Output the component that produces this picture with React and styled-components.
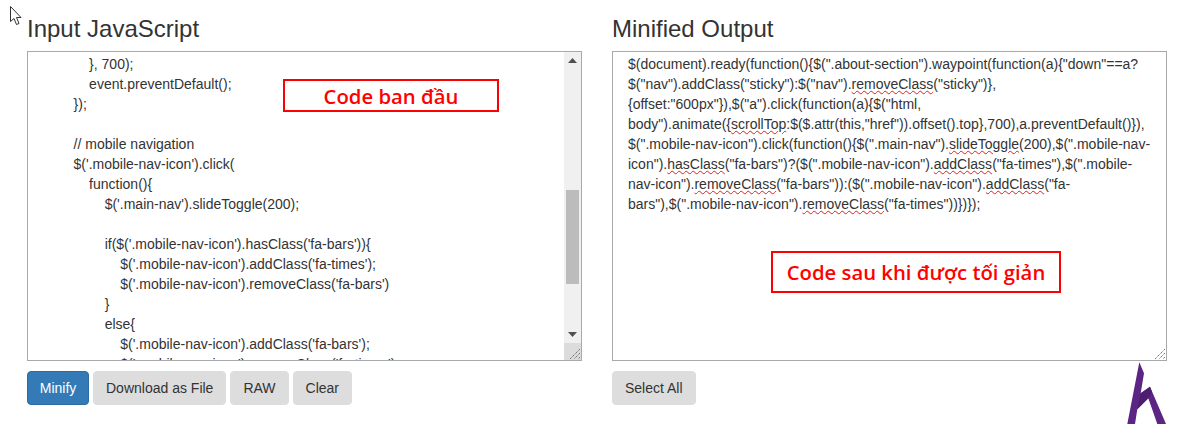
import React from "react";
import styled, { createGlobalStyle } from "styled-components";

const Global = createGlobalStyle`
  html, body { margin: 0; padding: 0; background: #fff; }
  body { font-family: "Liberation Sans", Arial, sans-serif; color: #333; overflow: hidden; }
  * { box-sizing: border-box; }
`;
const Page = styled.div`
  position: relative; width: 1192px; height: 425px; overflow: hidden;
  display: grid; grid-template-columns: 555px 555px; column-gap: 30px;
  padding: 15px 0 0 27px; align-content: start;
`;
const Column = styled.section`display: flex; flex-direction: column; position: relative;`;
const Heading = styled.h2`
  margin: 0 0 9px; font-size: 24px; line-height: 27px; font-weight: 400; color: #333;
`;
const Editor = styled.div`
  position: relative; height: 310px; border: 1px solid #a9a9a9; background: #fff;
  overflow: hidden; display: flex;
`;
const Code = styled.div`
  flex: 1; min-width: 0; white-space: pre; font-size: 14px; line-height: 20px; color: #333;
  padding: ${p => p.$pad};
`;
const Misspelt = styled.span`
  text-decoration: underline wavy #e02020 1px; text-underline-offset: 1px;
`;
const Scrollbar = styled.div`
  width: 17px; background: #f0f0f0; display: flex; flex-direction: column; flex: none;
  margin-bottom: 17px;
`;
const ScrollArrow = styled.div`
  height: 17px; flex: none; display: flex; align-items: center; justify-content: center;
`;
const ScrollTrack = styled.div`flex: 1; padding: 121px 2px 0;`;
const ScrollThumb = styled.div`height: 94px; background: #bcbcbc;`;
const Corner = styled.div`
  position: absolute; right: 0; bottom: 0; width: 17px; height: 17px;
  background: ${p => p.$filled ? "#dcdcdc" : "transparent"};
`;
const Actions = styled.div`display: flex; gap: 4px; margin-top: 10px;`;
const Button = styled.button`
  height: 34px; padding: 6px ${p => p.$primary ? "0" : "12px"};
  width: ${p => p.$primary ? "62px" : "auto"};
  border: 1px solid ${p => p.$primary ? "#2e6da4" : "#ddd"};
  border-radius: 4px; background: ${p => p.$primary ? "#337ab7" : "#ddd"};
  color: ${p => p.$primary ? "#fff" : "#333"};
  font: 400 14px/20px "Liberation Sans", Arial, sans-serif;
`;
const Callout = styled.div`
  position: absolute; display: flex; align-items: center; justify-content: center;
  left: ${p => p.$x}px; top: ${p => p.$y}px; width: ${p => p.$w}px; height: ${p => p.$h}px;
  border: 2px solid #f00; background: #fff; color: #f00;
  font: 600 ${p => p.$size}px "Open Sans", sans-serif;
`;
const Cursor = styled.svg`position: absolute; left: 10px; top: 6px;`;
const Logo = styled.svg`position: absolute; left: 1126px; top: 362px;`;

const inputCode = `        }, 700);
        event.preventDefault();
    });

    // mobile navigation
    $('.mobile-nav-icon').click(
        function(){
            $('.main-nav').slideToggle(200);

            if($('.mobile-nav-icon').hasClass('fa-bars')){
                $('.mobile-nav-icon').addClass('fa-times');
                $('.mobile-nav-icon').removeClass('fa-bars')
            }
            else{
                $('.mobile-nav-icon').addClass('fa-bars');
                $('.mobile-nav-icon').removeClass('fa-times');`;

const Resize = () => (
  <svg width="17" height="17" viewBox="0 0 17 17" style={{ display: "block" }}>
    <path d="M16 6 L6 16 M16 10 L10 16 M16 14 L14 16" stroke="#777" strokeWidth="1" strokeDasharray="1.5 .6" fill="none" />
  </svg>
);

export default function App() {
  return (
    <Page>
      <Global />
      <Column>
        <Heading>Input JavaScript</Heading>
        <Editor>
          <Code $pad="2px 0 0 30px">{inputCode}</Code>
          <Scrollbar>
            <ScrollArrow>
              <svg width="9" height="5" viewBox="0 0 9 5"><path d="M4.5 0 L9 5 H0 Z" fill="#505050" /></svg>
            </ScrollArrow>
            <ScrollTrack><ScrollThumb /></ScrollTrack>
            <ScrollArrow>
              <svg width="9" height="5" viewBox="0 0 9 5"><path d="M0 0 H9 L4.5 5 Z" fill="#505050" /></svg>
            </ScrollArrow>
          </Scrollbar>
          <Corner $filled><Resize /></Corner>
        </Editor>
        <Actions>
          <Button $primary>Minify</Button>
          <Button>Download as File</Button>
          <Button>RAW</Button>
          <Button>Clear</Button>
        </Actions>
      </Column>
      <Column>
        <Heading>Minified Output</Heading>
        <Editor>
          <Code $pad="2px 0 0 15px">
            {`$(document).ready(function(){$(".about-section").waypoint(function(a){"down"==a?
$("nav").addClass("sticky"):$("nav").`}<Misspelt>removeClass</Misspelt>{`("sticky")},
{offset:"600px"}),$("a").click(function(a){$("html,
body").animate({`}<Misspelt>scrollTop</Misspelt>{`:$($.attr(this,"href")).offset().top},700),a.preventDefault()}),
$(".mobile-nav-icon").click(function(){$(".main-nav").`}<Misspelt>slideToggle</Misspelt>{`(200),$(".mobile-nav-
icon").`}<Misspelt>hasClass</Misspelt>{`("fa-bars")?($(".mobile-nav-icon").`}<Misspelt>addClass</Misspelt>{`("fa-times"),$(".mobile-
nav-icon").`}<Misspelt>removeClass</Misspelt>{`("fa-bars")):($(".mobile-nav-icon").`}<Misspelt>addClass</Misspelt>{`("fa-
bars"),$(".mobile-nav-icon").`}<Misspelt>removeClass</Misspelt>{`("fa-times"))})});`}
          </Code>
          <Corner><Resize /></Corner>
        </Editor>
        <Actions>
          <Button>Select All</Button>
        </Actions>
      </Column>
      <Callout $x={283} $y={79} $w={216} $h={33} $size={20.3}>Code ban đầu</Callout>
      <Callout $x={771} $y={251} $w={290} $h={42} $size={20.3}>Code sau khi được tối giản</Callout>
      <Cursor width="14" height="20" viewBox="0 0 14 20">
        <path d="M.5.5 V15.5 L4 12.5 L6.5 18.5 L9 17.500 L6.5 11.5 H11 Z" fill="#fff" stroke="#333" strokeWidth="1" />
      </Cursor>
      <Logo width="41" height="63" viewBox="0 0 41 63">
        <path d="M13.300 .3 L18 11.300 L14.700 31.300 L24 24.700 L40 62 L31.300 62 L22.300 36.300 L11.300 47.300 L9 62 L1.300 62 Z" fill="#5c2483" />
        <path d="M14.700 31.300 L24 24.700 L26 30 L22.300 36.300 L11.300 47.300 Z" fill="#4d1d70" />
      </Logo>
    </Page>
  );
}
